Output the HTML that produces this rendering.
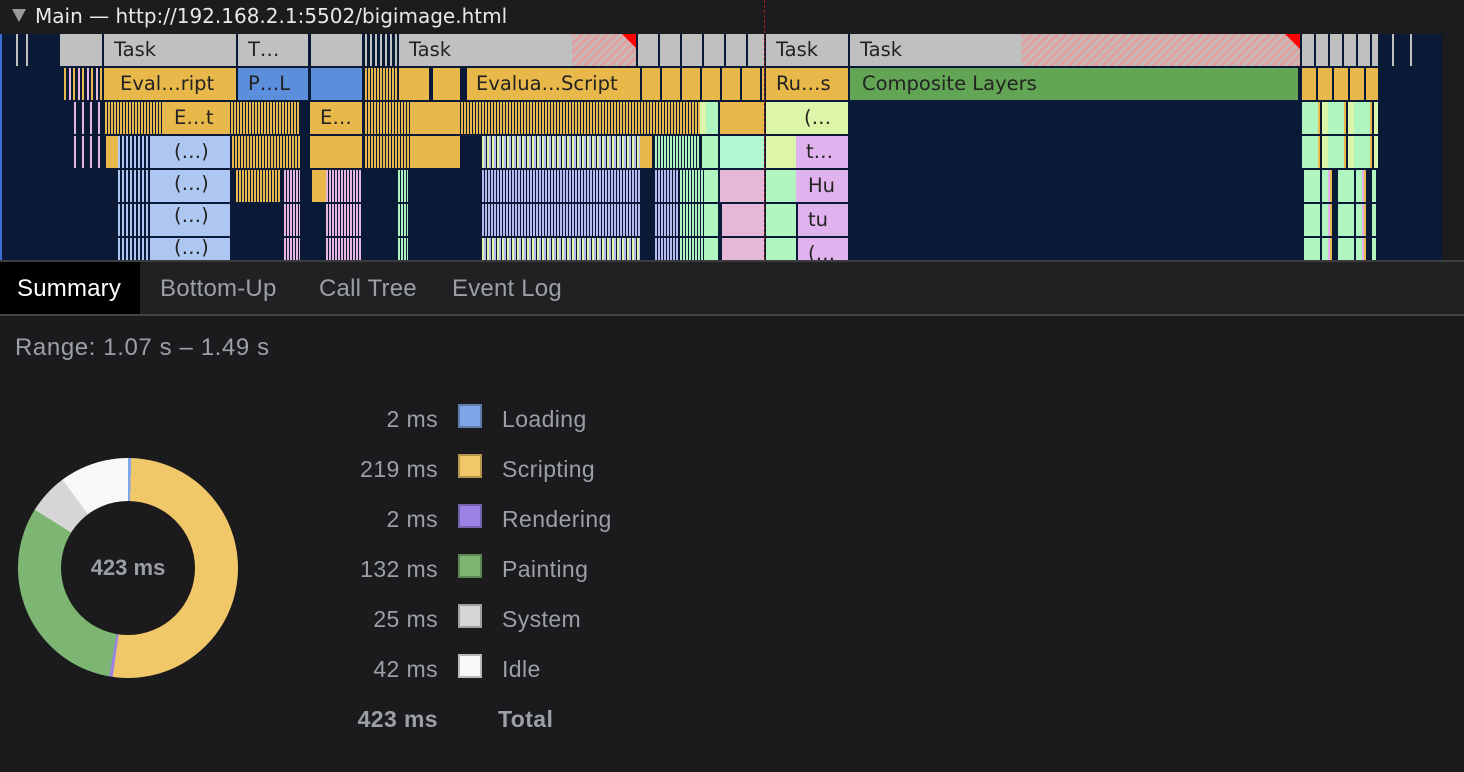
<!DOCTYPE html>
<html><head><meta charset="utf-8"><style>
*{margin:0;padding:0;box-sizing:border-box}
body{width:1464px;height:772px;background:#1b1b1d;font-family:"Liberation Sans",sans-serif;position:relative;overflow:hidden}
.a{position:absolute}
.b{position:absolute;font-family:"DejaVu Sans",sans-serif;font-size:19.5px;color:#222;line-height:32px;padding-left:10px;white-space:nowrap;overflow:hidden}
.g{background:#c0c0c0}
.o{background:#e8b84a}
.bl{background:#5b8fdc}
.gr{background:#62a655}
.lb{background:#aec6f2}
.ly{background:#dcf5a8}
.mi{background:#b0f7d2}
.lg{background:#b0f5bf}
.pk{background:#e6b8d8}
.lv{background:#e0b2ee}
.so{background:repeating-linear-gradient(90deg,#e8b84a 0 2px,#0a1a36 2px 3px)}
.sp{background:repeating-linear-gradient(90deg,#b8b8f0 0 2px,#0a1a36 2px 3px)}
.sb{background:repeating-linear-gradient(90deg,#aec6f2 0 2px,#0a1a36 2px 4px)}
.spk{background:repeating-linear-gradient(90deg,#e6b8e0 0 2px,#0a1a36 2px 3px)}
.sg{background:repeating-linear-gradient(90deg,#b0f5bf 0 2px,#0a1a36 2px 3px)}
.sy{background:repeating-linear-gradient(90deg,#dcf5a8 0 2px,#b8b8f0 2px 4px,#0a1a36 4px 5px)}
.hatch{background:repeating-linear-gradient(135deg,#e0a0a0 0 3px,#c8b8b8 3px 6px)}
.tab{position:absolute;top:275px;font-size:24px;color:#9aa0a6;letter-spacing:0.2px}
.v{position:absolute;width:120px;text-align:right;left:318px;font-size:23px;color:#9aa0a6;letter-spacing:0.4px}
.sw{position:absolute;left:458px;width:24px;height:24px;border:2px solid rgba(0,0,0,.25)}
.l{position:absolute;left:502px;font-size:23px;color:#9aa0a6;letter-spacing:0.4px}
</style></head><body>
<div class="a" style="left:0;top:0;width:1464px;height:34px;background:#1c1c1e"></div>
<div class="a" style="left:12px;top:9px;width:0;height:0;border-left:7px solid transparent;border-right:7px solid transparent;border-top:13px solid #9a9a9a"></div>
<div class="a" style="left:35px;top:4px;font-family:'DejaVu Sans',sans-serif;font-size:20px;color:#e8e8e8">Main — http://192.168.2.1:5502/bigimage.html</div>
<div class="a" style="left:0;top:34px;width:1442px;height:226px;background:#0a1a36;border-left:2px solid #3a6fd0"></div>
<div class="a" style="left:1442px;top:34px;width:22px;height:226px;background:#1c1c1e"></div>
<!-- row0 -->
<div class="a g" style="left:16px;top:34px;width:2px;height:32px"></div>
<div class="a g" style="left:26px;top:34px;width:2px;height:32px"></div>
<div class="b g" style="left:60px;top:34px;width:42px;height:32px"></div>
<div class="b g" style="left:104px;top:34px;width:132px;height:32px">Task</div>
<div class="b g" style="left:238px;top:34px;width:70px;height:32px">T…</div>
<div class="b g" style="left:311px;top:34px;width:51px;height:32px"></div>
<div class="a" style="left:365px;top:34px;width:32px;height:32px;background:repeating-linear-gradient(90deg,#c0c0c0 0 2px,#0a1a36 2px 5px)"></div>
<div class="b g" style="left:399px;top:34px;width:237px;height:32px">Task</div>
<div class="a hatch" style="left:572px;top:34px;width:64px;height:32px"></div>
<div class="a" style="left:622px;top:34px;width:0;height:0;border-left:14px solid transparent;border-top:14px solid #f00"></div>
<div class="a" style="left:638px;top:34px;width:126px;height:32px;background:repeating-linear-gradient(90deg,#c0c0c0 0 20px,#0a1a36 20px 22px)"></div>
<div class="b g" style="left:766px;top:34px;width:82px;height:32px">Task</div>
<div class="b g" style="left:850px;top:34px;width:450px;height:32px">Task</div>
<div class="a hatch" style="left:1022px;top:34px;width:278px;height:32px"></div>
<div class="a" style="left:1285px;top:34px;width:0;height:0;border-left:15px solid transparent;border-top:15px solid #f00"></div>
<div class="a" style="left:1302px;top:34px;width:76px;height:32px;background:repeating-linear-gradient(90deg,#c0c0c0 0 12px,#0a1a36 12px 14px)"></div>
<div class="a g" style="left:1392px;top:34px;width:2px;height:32px"></div>
<div class="a g" style="left:1410px;top:34px;width:2px;height:32px"></div>
<!-- row1 -->
<div class="a" style="left:64px;top:68px;width:38px;height:32px;background:repeating-linear-gradient(90deg,#e8b84a 0 2px,#0a1a36 2px 5px,#e6b8e0 5px 7px,#0a1a36 7px 9px)"></div>
<div class="b o" style="left:104px;top:68px;width:132px;height:32px;padding-left:16px">Eval…ript</div>
<div class="b bl" style="left:238px;top:68px;width:70px;height:32px">P…L</div>
<div class="a bl" style="left:311px;top:68px;width:51px;height:32px"></div>
<div class="a so" style="left:365px;top:68px;width:32px;height:32px"></div>
<div class="a o" style="left:399px;top:68px;width:30px;height:32px"></div>
<div class="a o" style="left:433px;top:68px;width:27px;height:32px"></div>
<div class="b o" style="left:467px;top:68px;width:173px;height:32px;padding-left:9px">Evalua…Script</div>
<div class="a" style="left:642px;top:68px;width:122px;height:32px;background:repeating-linear-gradient(90deg,#e8b84a 0 18px,#0a1a36 18px 20px)"></div>
<div class="b o" style="left:766px;top:68px;width:82px;height:32px">Ru…s</div>
<div class="b gr" style="left:850px;top:68px;width:448px;height:32px;padding-left:12px">Composite Layers</div>
<div class="a" style="left:1302px;top:68px;width:76px;height:32px;background:repeating-linear-gradient(90deg,#e8b84a 0 14px,#0a1a36 14px 16px)"></div>
<!-- row2 -->
<div class="a" style="left:74px;top:102px;width:30px;height:66px;background:repeating-linear-gradient(90deg,#e6b8e0 0 2px,#0a1a36 2px 8px)"></div>
<div class="a so" style="left:105px;top:102px;width:195px;height:32px"></div>
<div class="b o" style="left:164px;top:102px;width:66px;height:32px">E…t</div>
<div class="b o" style="left:310px;top:102px;width:52px;height:32px">E…</div>
<div class="a so" style="left:365px;top:102px;width:335px;height:32px"></div>
<div class="a o" style="left:410px;top:102px;width:28px;height:32px"></div>
<div class="a o" style="left:432px;top:102px;width:28px;height:32px"></div>
<div class="a ly" style="left:700px;top:102px;width:6px;height:32px"></div>
<div class="a lg" style="left:706px;top:102px;width:12px;height:32px"></div>
<div class="a o" style="left:720px;top:102px;width:44px;height:32px"></div>
<div class="b ly" style="left:766px;top:102px;width:82px;height:32px;padding-left:38px">(…</div>
<div class="a" style="left:1302px;top:102px;width:76px;height:66px;background:repeating-linear-gradient(90deg,#b0f5bf 0 16px,#e8b84a 16px 18px,#0a1a36 18px 20px,#dcf5a8 20px 26px)"></div>
<!-- row3 -->
<div class="a o" style="left:106px;top:136px;width:12px;height:32px"></div>
<div class="a sb" style="left:118px;top:136px;width:32px;height:124px"></div>
<div class="b lb" style="left:150px;top:136px;width:80px;height:124px;line-height:32px;white-space:normal;padding-left:24px">(…)<br>(…)<br>(…)<br>(…)</div>
<div class="a" style="left:150px;top:168px;width:80px;height:2px;background:#0a1a36"></div>
<div class="a" style="left:150px;top:202px;width:80px;height:2px;background:#0a1a36"></div>
<div class="a" style="left:150px;top:236px;width:80px;height:2px;background:#0a1a36"></div>
<div class="a so" style="left:232px;top:136px;width:68px;height:32px"></div>
<div class="a o" style="left:310px;top:136px;width:52px;height:32px"></div>
<div class="a so" style="left:365px;top:136px;width:45px;height:32px"></div>
<div class="a o" style="left:410px;top:136px;width:50px;height:32px"></div>
<div class="a sy" style="left:482px;top:136px;width:158px;height:32px"></div>
<div class="a o" style="left:640px;top:136px;width:12px;height:32px"></div>
<div class="a sg" style="left:655px;top:136px;width:45px;height:32px"></div>
<div class="a lg" style="left:702px;top:136px;width:16px;height:32px"></div>
<div class="a mi" style="left:720px;top:136px;width:44px;height:32px"></div>
<div class="a ly" style="left:766px;top:136px;width:30px;height:32px"></div>
<div class="b lv" style="left:796px;top:136px;width:52px;height:32px">t…</div>
<!-- rows 4-6 -->
<div class="a spk" style="left:284px;top:170px;width:16px;height:90px"></div>
<div class="a so" style="left:236px;top:170px;width:44px;height:32px"></div>
<div class="a o" style="left:312px;top:170px;width:14px;height:32px"></div>
<div class="a spk" style="left:326px;top:170px;width:36px;height:90px"></div>
<div class="a sg" style="left:398px;top:170px;width:10px;height:90px"></div>
<div class="a sp" style="left:482px;top:170px;width:158px;height:66px"></div>
<div class="a sy" style="left:482px;top:238px;width:158px;height:22px"></div>
<div class="a sp" style="left:655px;top:170px;width:24px;height:90px"></div>
<div class="a sg" style="left:680px;top:170px;width:24px;height:90px"></div>
<div class="a lg" style="left:704px;top:170px;width:14px;height:90px"></div>
<div class="a pk" style="left:720px;top:170px;width:44px;height:32px"></div>
<div class="a pk" style="left:722px;top:204px;width:42px;height:56px"></div>
<div class="a lg" style="left:766px;top:170px;width:30px;height:90px"></div>
<div class="b lv" style="left:796px;top:170px;width:52px;height:32px;padding-left:12px">Hu</div>
<div class="b lv" style="left:798px;top:204px;width:50px;height:32px;padding-left:10px">tu</div>
<div class="b lv" style="left:798px;top:238px;width:50px;height:22px;padding-left:10px">(…</div>
<div class="a" style="left:1304px;top:170px;width:72px;height:90px;background:repeating-linear-gradient(90deg,#b0f5bf 0 16px,#0a1a36 16px 18px,#b0f5bf 18px 24px,#e0b2ee 24px 26px,#e8b84a 26px 28px,#0a1a36 28px 34px)"></div>
<div class="a" style="left:2px;top:66px;width:1440px;height:2px;background:#0a1a36"></div>
<div class="a" style="left:2px;top:100px;width:1440px;height:2px;background:#0a1a36"></div>
<div class="a" style="left:2px;top:134px;width:1440px;height:2px;background:#0a1a36"></div>
<div class="a" style="left:2px;top:168px;width:1440px;height:2px;background:#0a1a36"></div>
<div class="a" style="left:2px;top:202px;width:1440px;height:2px;background:#0a1a36"></div>
<div class="a" style="left:2px;top:236px;width:1440px;height:2px;background:#0a1a36"></div>
<div class="a" style="left:764px;top:0;width:1px;height:260px;border-left:1px dashed #a02020"></div>
<!-- tabs -->
<div class="a" style="left:0;top:260px;width:1464px;height:2px;background:#3c3c3e"></div>
<div class="a" style="left:0;top:262px;width:1464px;height:52px;background:#212123"></div>
<div class="a" style="left:0;top:262px;width:140px;height:52px;background:#000"></div>
<div class="a" style="left:0;top:314px;width:1464px;height:2px;background:#434345"></div>
<div class="tab" style="left:17px;color:#fff">Summary</div>
<div class="tab" style="left:160px">Bottom-Up</div>
<div class="tab" style="left:319px">Call Tree</div>
<div class="tab" style="left:452px">Event Log</div>
<div class="a" style="left:15px;top:334px;font-size:24px;color:#9aa0a6;letter-spacing:0.6px">Range: 1.07 s – 1.49 s</div>
<!-- donut -->
<div class="a" style="left:18px;top:458px;width:220px;height:220px;border-radius:50%;background:conic-gradient(#7fa6e6 0 1.7deg,#f0c86a 1.7deg 188deg,#9b82e3 188deg 189.8deg,#7db672 189.8deg 302deg,#d6d6d6 302deg 323.4deg,#f8f8f8 323.4deg 360deg)"></div>
<div class="a" style="left:61px;top:501px;width:134px;height:134px;border-radius:50%;background:#1b1b1d"></div>
<div class="a" style="left:61px;top:555px;width:134px;text-align:center;font-size:22px;font-weight:bold;color:#9aa0a6">423 ms</div>
<!-- legend -->
<div class="v" style="top:406px">2 ms</div><div class="sw" style="top:404px;background:#7fa6e6"></div><div class="l" style="top:406px">Loading</div>
<div class="v" style="top:456px">219 ms</div><div class="sw" style="top:454px;background:#f0c86a"></div><div class="l" style="top:456px">Scripting</div>
<div class="v" style="top:506px">2 ms</div><div class="sw" style="top:504px;background:#9b82e3"></div><div class="l" style="top:506px">Rendering</div>
<div class="v" style="top:556px">132 ms</div><div class="sw" style="top:554px;background:#7db672"></div><div class="l" style="top:556px">Painting</div>
<div class="v" style="top:606px">25 ms</div><div class="sw" style="top:604px;background:#d6d6d6"></div><div class="l" style="top:606px">System</div>
<div class="v" style="top:656px">42 ms</div><div class="sw" style="top:654px;background:#f8f8f8"></div><div class="l" style="top:656px">Idle</div>
<div class="v" style="top:706px;font-weight:bold">423 ms</div><div class="l" style="top:706px;left:498px;font-weight:bold">Total</div>
</body></html>
